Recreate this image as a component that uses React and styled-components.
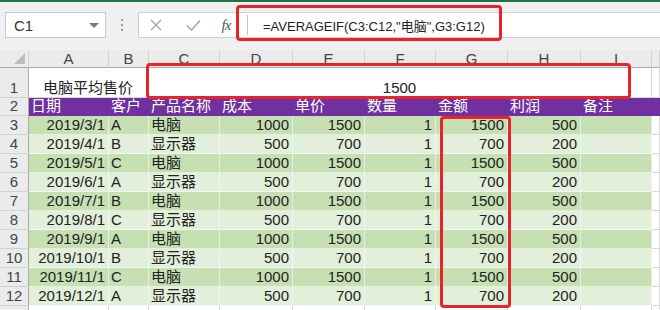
import React from 'react';
import styled, { createGlobalStyle } from 'styled-components';

const GlobalStyle = createGlobalStyle`
  html, body {
    margin: 0;
    padding: 0;
    background: #ffffff;
    overflow: hidden;
  }
  * { box-sizing: border-box; }
`;

const FONT = `"Liberation Sans", "Noto Sans CJK SC", sans-serif`;

const Page = styled.div`
  position: relative;
  width: 660px;
  height: 310px;
  overflow: hidden;
  font-family: ${FONT};
  color: #222;
`;

const TopLine = styled.div`
  height: 2px;
  background: #217346;
`;

const Toolbar = styled.div`
  height: 48px;
  background: #f0f0f0;
  display: flex;
  align-items: flex-start;
  padding: 10px 0 0 5px;
`;

const NameBox = styled.div`
  width: 101px;
  height: 26px;
  background: #fff;
  border: 1px solid #c8c8c8;
  display: flex;
  align-items: center;
  justify-content: space-between;
  padding: 0 6px 0 8px;
  font-size: 15px;
  color: #333;
`;

const Caret = styled.span`
  width: 0;
  height: 0;
  border-left: 5px solid transparent;
  border-right: 5px solid transparent;
  border-top: 5px solid #7a7a7a;
`;

const Grip = styled.div`
  width: 32px;
  height: 26px;
  display: flex;
  flex-direction: column;
  align-items: center;
  justify-content: center;
  gap: 3px;
  & > span {
    width: 2px;
    height: 2px;
    background: #9a9a9a;
  }
`;

const FormulaBar = styled.div`
  flex: 1;
  height: 26px;
  background: #fff;
  border: 1px solid #d0d0d0;
  border-right: none;
  display: flex;
  align-items: center;
`;

const IconSlot = styled.div`
  width: ${(p) => p.$w}px;
  height: 100%;
  display: flex;
  align-items: center;
  justify-content: center;
`;

const Fx = styled.span`
  font-family: "Liberation Serif", serif;
  font-style: italic;
  font-size: 15px;
  color: #555;
  letter-spacing: -1px;
`;

const Divider = styled.div`
  width: 1px;
  height: 20px;
  background: #c4c4c4;
  margin: 0 15px 0 8px;
`;

const FormulaText = styled.div`
  font-size: 13px;
  color: #222;
  white-space: nowrap;
`;

const Sheet = styled.div`
  display: grid;
  grid-template-columns: 29px 80px 40px 71px 73px 72px 71px 72px 73px 71px 1fr;
  grid-template-rows: 18px 30px 18px repeat(11, 19px);
`;

const ColHead = styled.div`
  background: #ebebeb;
  border-right: 1px solid #d2d2d2;
  border-bottom: 1px solid #ababab;
  font-size: 15px;
  color: #444;
  display: flex;
  align-items: flex-end;
  justify-content: center;
  line-height: 16px;
  overflow: hidden;
`;

const Corner = styled(ColHead)`
  justify-content: flex-end;
  align-items: flex-end;
  padding: 0 3px 3px 0;
`;

const RowHead = styled.div`
  background: #ebebeb;
  border-right: 1px solid #ababab;
  border-bottom: 1px solid #d2d2d2;
  font-size: 15px;
  color: #444;
  display: flex;
  align-items: flex-end;
  justify-content: center;
  line-height: 18px;
`;

const Cell = styled.div`
  grid-column: ${(p) => (p.$span ? `span ${p.$span}` : 'auto')};
  background: ${(p) => p.$bg || '#fff'};
  color: ${(p) => p.$color || '#222'};
  border-right: 1px solid ${(p) => p.$line || '#d9d9d9'};
  border-bottom: 1px solid ${(p) => p.$line || '#d9d9d9'};
  font-size: 15px;
  display: flex;
  align-items: flex-end;
  justify-content: ${(p) =>
    p.$align === 'right' ? 'flex-end' : p.$align === 'center' ? 'center' : 'flex-start'};
  padding: 0 3px 0 2px;
  line-height: 18px;
  white-space: nowrap;
  overflow: visible;
`;

const Mark = styled.div`
  position: absolute;
  left: ${(p) => p.$x}px;
  top: ${(p) => p.$y}px;
  width: ${(p) => p.$w}px;
  height: ${(p) => p.$h}px;
  border: 3px solid #e8232a;
  border-radius: 4px;
  pointer-events: none;
`;

const DARK = '#c6e0b4';
const LIGHT = '#e2efda';
const PURPLE = '#7030a0';

const letters = ['A', 'B', 'C', 'D', 'E', 'F', 'G', 'H', 'I', ''];
const headers = ['日期', '客户', '产品名称', '成本', '单价', '数量', '金额', '利润', '备注'];

const rows = Array.from({ length: 10 }, (_, i) => {
  const pc = i % 2 === 0;
  return {
    date: `2019/${i + 3}/1`,
    client: ['A', 'B', 'C'][i % 3],
    product: pc ? '电脑' : '显示器',
    cost: pc ? 1000 : 500,
    price: pc ? 1500 : 700,
    qty: 1,
    amount: pc ? 1500 : 700,
    profit: pc ? 500 : 200,
  };
});

const CrossIcon = () => (
  <svg width="12" height="12" viewBox="0 0 12 12">
    <path d="M1 1 L11 11 M11 1 L1 11" stroke="#a6a6a6" strokeWidth="1.4" fill="none" />
  </svg>
);

const CheckIcon = () => (
  <svg width="15" height="12" viewBox="0 0 15 12">
    <path d="M1 6.5 L5.5 11 L14 1.5" stroke="#a6a6a6" strokeWidth="1.5" fill="none" />
  </svg>
);

const CornerIcon = () => (
  <svg width="11" height="11" viewBox="0 0 11 11">
    <polygon points="11,0 11,11 0,11" fill="#bdbdbd" />
  </svg>
);

export default function App() {
  return (
    <Page>
      <GlobalStyle />
      <TopLine />
      <Toolbar>
        <NameBox>
          C1
          <Caret />
        </NameBox>
        <Grip>
          <span />
          <span />
          <span />
        </Grip>
        <FormulaBar>
          <IconSlot $w={34}>
            <CrossIcon />
          </IconSlot>
          <IconSlot $w={40}>
            <CheckIcon />
          </IconSlot>
          <IconSlot $w={26}>
            <Fx>fx</Fx>
          </IconSlot>
          <Divider />
          <FormulaText>=AVERAGEIF(C3:C12,"电脑",G3:G12)</FormulaText>
        </FormulaBar>
      </Toolbar>

      <Sheet>
        <Corner>
          <CornerIcon />
        </Corner>
        {letters.map((l, i) => (
          <ColHead key={`h${i}`}>{l}</ColHead>
        ))}

        <RowHead>1</RowHead>
        <Cell $span={2} $align="center">电脑平均售价</Cell>
        <Cell $span={7} $align="center">1500</Cell>
        <Cell />

        <RowHead>2</RowHead>
        {headers.map((h) => (
          <Cell key={h} $bg={PURPLE} $color="#fff" $line={PURPLE}>
            {h}
          </Cell>
        ))}
        <Cell $bg={PURPLE} $line={PURPLE} />

        {rows.map((r, i) => {
          const bg = i % 2 === 0 ? DARK : LIGHT;
          const line = 'rgba(255,255,255,0.55)';
          return (
            <React.Fragment key={r.date}>
              <RowHead>{i + 3}</RowHead>
              <Cell $bg={bg} $line={line} $align="right">{r.date}</Cell>
              <Cell $bg={bg} $line={line}>{r.client}</Cell>
              <Cell $bg={bg} $line={line}>{r.product}</Cell>
              <Cell $bg={bg} $line={line} $align="right">{r.cost}</Cell>
              <Cell $bg={bg} $line={line} $align="right">{r.price}</Cell>
              <Cell $bg={bg} $line={line} $align="right">{r.qty}</Cell>
              <Cell $bg={bg} $line={line} $align="right">{r.amount}</Cell>
              <Cell $bg={bg} $line={line} $align="right">{r.profit}</Cell>
              <Cell $bg={bg} $line={line} />
              <Cell />
            </React.Fragment>
          );
        })}

        <RowHead />
        {letters.map((_, i) => (
          <Cell key={`e${i}`} />
        ))}
      </Sheet>

      <Mark $x={236} $y={5} $w={266} $h={36} />
      <Mark $x={146} $y={63} $w={485} $h={36} />
      <Mark $x={440} $y={116} $w={71} $h={192} />
    </Page>
  );
}
